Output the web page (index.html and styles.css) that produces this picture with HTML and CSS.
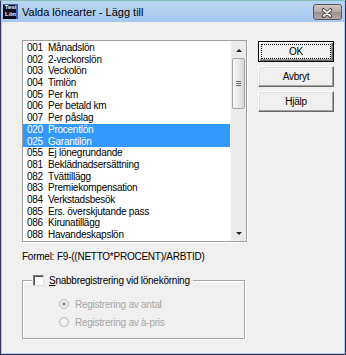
FILE: index.html
```html
<!DOCTYPE html>
<html lang="sv">
<head>
  <meta charset="UTF-8" />
  <title>Valda lönearter - Lägg till</title>
  <link rel="stylesheet" href="styles.css">
</head>
<body>

  <div class="window">

    <!-- titelrad -->
    <div class="titlebar">
      <div class="app-icon"><span>Tesi</span><span>Lön</span></div>
      <div class="title">Valda lönearter - Lägg till</div>
      <div class="close-btn">
        <svg width="29" height="16" viewBox="0 0 29 16">
          <path d="M10.5 6 L17.5 12 M17.5 6 L10.5 12" stroke="#3a3434" stroke-width="3.6" stroke-linecap="round" fill="none"/>
          <path d="M10.5 6 L17.5 12 M17.5 6 L10.5 12" stroke="#fff" stroke-width="1.8" stroke-linecap="round" fill="none"/>
        </svg>
      </div>
    </div>

    <div class="content">
      <div class="top-row">

        <!-- lista med lönearter -->
        <div class="listbox">
          <ul class="items">
            <li><span class="code">001</span>Månadslön</li>
            <li><span class="code">002</span>2-veckorslön</li>
            <li><span class="code">003</span>Veckolön</li>
            <li><span class="code">004</span>Timlön</li>
            <li><span class="code">005</span>Per km</li>
            <li><span class="code">006</span>Per betald km</li>
            <li><span class="code">007</span>Per påslag</li>
            <li class="selected"><span class="code">020</span>Procentlön</li>
            <li class="selected"><span class="code">025</span>Garantilön</li>
            <li><span class="code">055</span>Ej lönegrundande</li>
            <li><span class="code">081</span>Beklädnadsersättning</li>
            <li><span class="code">082</span>Tvättillägg</li>
            <li><span class="code">083</span>Premiekompensation</li>
            <li><span class="code">084</span>Verkstadsbesök</li>
            <li><span class="code">085</span>Ers. överskjutande pass</li>
            <li><span class="code">086</span>Kirunatillägg</li>
            <li><span class="code">088</span>Havandeskapslön</li>
          </ul>
          <div class="scrollbar">
            <div class="arrow up"></div>
            <div class="thumb"><i></i><i></i><i></i></div>
            <div class="track"></div>
            <div class="arrow down"></div>
          </div>
        </div>

        <!-- knappar -->
        <div class="buttons">
          <button class="btn default">OK</button>
          <button class="btn">Avbryt</button>
          <button class="btn">Hjälp</button>
        </div>
      </div>

      <div class="formula"><span class="label">Formel:</span>F9-((NETTO*PROCENT)/ARBTID)</div>

      <fieldset class="group">
        <legend><span class="checkbox"></span><span><u>S</u>nabbregistrering vid lönekörning</span></legend>
        <div class="radio-row"><span class="radio checked"></span>Registrering av antal</div>
        <div class="radio-row"><span class="radio"></span>Registrering av à-pris</div>
      </fieldset>
    </div>

  </div>

</body>
</html>
```

FILE: styles.css
```css
html, body {
  margin: 0;
  height: 100%;
}

body {
  font-family: "Liberation Sans", Arial, sans-serif;
  font-size: 10px;
  letter-spacing: -0.25px;
  color: #000;
  background: #f0f0f0;
  overflow: hidden;
}

.window {
  box-sizing: border-box;
  width: 346px;
  height: 355px;
  border: 1px solid #34345e;
  border-top-color: #84bdb8;
  background: #a9c9ee;
  padding: 0 1px 1px 1px;
  display: flex;
  flex-direction: column;
}

.titlebar {
  height: 21px;
  display: flex;
  align-items: center;
  padding: 0 2px 0 1px;
  background: linear-gradient(#b8d4f2, #a6c8ee);
}

.app-icon {
  width: 15px;
  height: 15px;
  background: #0b0b22;
  color: #fff;
  font-size: 6px;
  font-weight: bold;
  letter-spacing: 0;
  line-height: 7px;
  display: flex;
  flex-direction: column;
  align-items: center;
  box-shadow: inset -4px 3px 0 -2px #3b5fb0;
}

.title {
  margin-left: 4px;
  font-size: 11px;
  letter-spacing: 0;
}

.close-btn {
  margin-left: auto;
  width: 29px;
  height: 16px;
  box-sizing: border-box;
  border: 1px solid #5e5858;
  border-radius: 3px;
  background: linear-gradient(#d2c6c6, #b2a6a6 50%, #9a8f8f 51%, #b4a8a8);
  overflow: hidden;
}

.close-btn svg {
  display: block;
  margin: -1px;
}

.content {
  flex: 1;
  background: #f0f0f0;
  padding: 18px 0 0 20px;
}

.top-row {
  display: flex;
  align-items: flex-start;
}

.listbox {
  box-sizing: border-box;
  width: 225px;
  height: 202px;
  border: 1px solid #a0a0a0;
  box-shadow: 1px 1px 0 #fff;
  background: #fff;
  display: flex;
}

.items {
  list-style: none;
  margin: 0;
  padding: 1px 0 0;
  width: 208px;
}

.items li {
  height: 11.7px;
  line-height: 11.7px;
  padding-left: 4px;
  white-space: nowrap;
}

.items li.selected {
  background: #3399ff;
  color: #fff;
}

.code {
  display: inline-block;
  width: 21px;
}

.scrollbar {
  width: 15px;
  background: #ebebeb;
  border-left: 1px solid #f6f6f6;
  display: flex;
  flex-direction: column;
  align-items: center;
}

.arrow {
  height: 17px;
  width: 100%;
  box-sizing: border-box;
  padding-top: 8px;
  display: flex;
  justify-content: center;
}

.arrow::before {
  content: "";
  width: 0;
  height: 0;
  border-left: 3px solid transparent;
  border-right: 3px solid transparent;
}

.arrow.up::before {
  border-bottom: 3px solid #222;
}

.arrow.down::before {
  border-top: 3px solid #222;
}

.thumb {
  box-sizing: border-box;
  width: 13px;
  height: 51px;
  border: 1px solid #a8a8a8;
  border-radius: 2px;
  background: linear-gradient(to right, #f6f6f6, #e8e8e8 55%, #d6d6d6);
  display: flex;
  flex-direction: column;
  align-items: center;
  justify-content: center;
  gap: 1px;
}

.thumb i {
  display: block;
  width: 5px;
  height: 1px;
  background: #6a6a6a;
}

.track {
  flex: 1;
}

.buttons {
  display: flex;
  flex-direction: column;
  gap: 4px;
  margin: 1px 0 0 11px;
}

.btn {
  position: relative;
  width: 76px;
  height: 21px;
  box-sizing: border-box;
  padding: 0;
  font: inherit;
  letter-spacing: inherit;
  color: #000;
  background: #f0f0f0;
  border: 1px solid;
  border-color: #fff #696969 #696969 #fff;
  box-shadow: inset -1px -1px 0 #a0a0a0, inset 1px 1px 0 #e3e3e3;
}

.btn.default {
  border: 1px solid #000;
  box-shadow: inset 1px 1px 0 #fff, inset -1px -1px 0 #696969, inset -2px -2px 0 #a0a0a0;
}

.btn.default::after {
  content: "";
  position: absolute;
  top: 2px;
  left: 2px;
  right: 2px;
  bottom: 2px;
  border: 1px dotted #000;
}

.formula {
  margin-top: 9px;
  height: 12px;
  line-height: 12px;
  white-space: nowrap;
}

.formula .label {
  display: inline-block;
  width: 35px;
}

.group {
  box-sizing: border-box;
  width: 223px;
  height: 65px;
  min-width: 0;
  margin: 11px 0 0 0;
  padding: 0 0 0 9px;
  border: 1px solid #a8a8a8;
  box-shadow: inset 1px 1px 0 #fff, 1px 1px 0 #fff;
}

.group legend {
  display: flex;
  align-items: center;
  height: 12px;
  padding: 0 3px 0 1px;
  background: #f0f0f0;
}

.checkbox {
  box-sizing: border-box;
  width: 11px;
  height: 11px;
  margin-right: 5px;
  background: #fff;
  border: 1px solid;
  border-color: #7a7a7a #e0e0e0 #e0e0e0 #7a7a7a;
  box-shadow: inset 1px 1px 0 #505050;
}

.radio-row {
  display: flex;
  align-items: center;
  height: 18px;
  margin-left: 27px;
  color: #a6a6a6;
}

.radio-row:first-of-type {
  margin-top: 9px;
}

.radio {
  box-sizing: border-box;
  width: 10px;
  height: 10px;
  margin-right: 6px;
  border-radius: 50%;
  border: 1px solid #b4b4b4;
  background: #f2f2f2;
  display: flex;
  align-items: center;
  justify-content: center;
}

.radio.checked::after {
  content: "";
  width: 4px;
  height: 4px;
  border-radius: 50%;
  background: #a4a4a4;
}
```
